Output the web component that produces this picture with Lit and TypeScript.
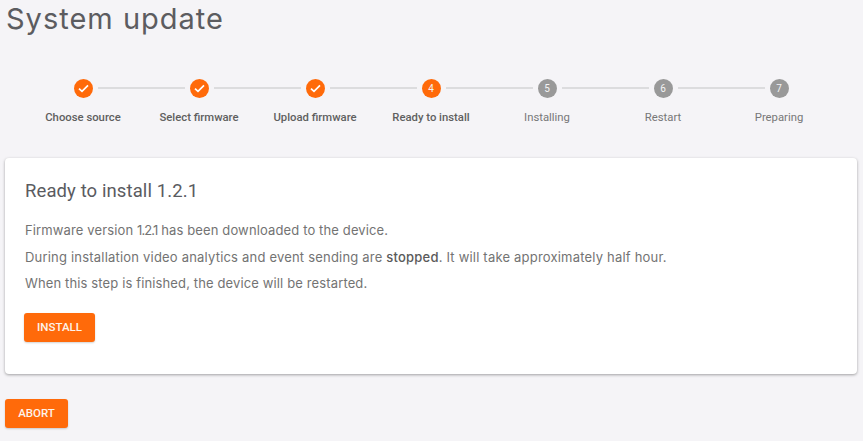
import { LitElement, css, html } from "lit";
import { customElement } from "lit/decorators.js";

const steps = [
  { label: "Choose source", state: "done" },
  { label: "Select firmware", state: "done" },
  { label: "Upload firmware", state: "done" },
  { label: "Ready to install", state: "active" },
  { label: "Installing", state: "todo" },
  { label: "Restart", state: "todo" },
  { label: "Preparing", state: "todo" },
];

@customElement("app-root")
export class AppRoot extends LitElement {
  static styles = css`
    :host {
      display: block;
      height: 441px;
      overflow: hidden;
      background: #f5f4f7;
      font-family: "Roboto", sans-serif;
      color: #5f5f5f;
    }
    h1 {
      margin: 0;
      padding: 1px 0 0 6px;
      height: 68px;
      box-sizing: border-box;
      font: 400 29px/36px "Inter", sans-serif;
      letter-spacing: 1px;
      color: #5c5c60;
    }
    .stepper {
      display: grid;
      grid-template-columns: repeat(7, 116px);
      padding: 10px 0 0 25px;
      height: 90px;
      box-sizing: border-box;
    }
    .step {
      display: flex;
      flex-direction: column;
      align-items: center;
    }
    .head {
      display: flex;
      align-items: center;
      align-self: stretch;
      height: 20px;
    }
    .seg {
      flex: 1;
      height: 2px;
      background: #dcdcde;
    }
    .seg.left {
      margin-right: 5px;
    }
    .seg.right {
      margin-left: 5px;
    }
    .seg.none {
      background: transparent;
    }
    .dot {
      width: 19px;
      height: 19px;
      border-radius: 50%;
      display: flex;
      align-items: center;
      justify-content: center;
      font-size: 10px;
      color: #f4f4f4;
      background: #999999;
    }
    .done .dot,
    .active .dot {
      background: #ff6a0a;
    }
    .dot svg {
      width: 11px;
      height: 9px;
    }
    .label {
      margin-top: 12px;
      font-size: 11.3px;
      line-height: 16px;
      color: #777777;
      white-space: nowrap;
    }
    .done .label,
    .active .label {
      font-weight: 500;
      color: #5f5f5f;
    }
    .card {
      margin: 0 6px 0 5px;
      height: 216px;
      box-sizing: border-box;
      padding: 21px 19px 0 20px;
      background: #fff;
      border-radius: 4px;
      box-shadow: 0 1px 3px rgba(0, 0, 0, 0.35);
    }
    h2 {
      margin: 0 0 14px;
      font: 400 18.5px/24px "Roboto", sans-serif;
      letter-spacing: 0.1px;
      color: #5a5b5f;
    }
    p {
      margin: 0;
      font: 400 13px/26.5px "Inter", sans-serif;
      letter-spacing: 0.2px;
      color: #737373;
    }
    p.tight {
      letter-spacing: 0.13px;
    }
    p b {
      font-weight: 500;
      color: #5a5a5a;
    }
    .ver {
      letter-spacing: -0.9px;
    }
    button {
      display: block;
      border: 0;
      border-radius: 3px;
      background: #ff6a0a;
      color: #fdf3ea;
      font: 500 11.5px/29px "Roboto", sans-serif;
      height: 29px;
      padding: 0;
      box-shadow: 0 1px 2px rgba(0, 0, 0, 0.18);
    }
    .install {
      width: 71px;
      margin: 16px 0 0 -1px;
    }
    .abort {
      width: 63px;
      margin: 25px 0 0 5px;
    }
  `;

  renderStep(s: { label: string; state: string }, i: number) {
    return html`
      <div class="step ${s.state}">
        <div class="head">
          <span class="seg left ${i === 0 ? "none" : ""}"></span>
          <span class="dot">
            ${s.state === "done"
              ? html`<svg viewBox="0 0 11 9" fill="none" stroke="#fff" stroke-width="1.7">
                  <path d="M1 4.6 L4 7.4 L10 1.3" />
                </svg>`
              : i + 1}
          </span>
          <span class="seg right ${i === steps.length - 1 ? "none" : ""}"></span>
        </div>
        <div class="label">${s.label}</div>
      </div>
    `;
  }

  render() {
    return html`
      <h1>System update</h1>
      <div class="stepper">${steps.map((s, i) => this.renderStep(s, i))}</div>
      <div class="card">
        <h2>Ready to install 1.2.1</h2>
        <p class="tight">Firmware version <span class="ver">1.2.1</span> has been downloaded to the device.</p>
        <p>During installation video analytics and event sending are <b>stopped</b>. It will take approximately half hour.</p>
        <p class="tight">When this step is finished, the device will be restarted.</p>
        <button class="install">INSTALL</button>
      </div>
      <button class="abort">ABORT</button>
    `;
  }
}
